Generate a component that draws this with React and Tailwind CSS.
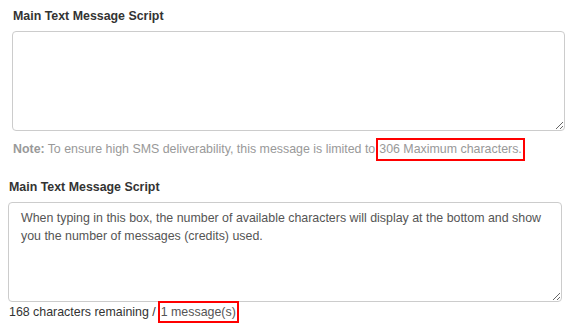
export default function App() {
  return (
    <div className="w-[575px] h-[331px] bg-white text-[12.4px] leading-[17px] text-[#333] overflow-hidden" style={{ fontFamily: '"Liberation Sans", Arial, sans-serif' }}>
      <div className="pl-[13px] pt-[8px] font-bold">Main Text Message Script</div>
      <textarea
        className="block ml-[12px] mt-[6px] w-[553px] h-[100px] border border-[#ccc] rounded-[4px] px-[12px] py-[6px] text-[#555] outline-none"
        defaultValue=""
      />
      <div className="pl-[13px] mt-[7px] text-[#999] flex items-center h-[23px]">
        <span className="font-bold">Note:</span>
        <span className="ml-[3px]">To ensure high SMS deliverability, this message is limited to</span>
        <span className="inline-flex items-center h-[23px] border-2 border-[#f00] pl-[1px] pr-[1px] ml-[1px]">306 Maximum characters.</span>
      </div>
      <div className="pl-[9px] mt-[18px] font-bold">Main Text Message Script</div>
      <textarea
        className="block ml-[8px] mt-[6px] w-[554px] h-[100px] border border-[#ccc] rounded-[4px] pl-[12px] pr-[10px] py-[6px] text-[#555] leading-[18px] outline-none"
        defaultValue="When typing in this box, the number of available characters will display at the bottom and show you the number of messages (credits) used."
      />
      <div className="pl-[9px] flex items-center h-[22px] -mt-[1px]">
        <span>168 characters remaining /</span>
        <span className="inline-flex items-center h-[22px] border-2 border-[#f00] pl-[1px] pr-[1px] ml-[2px] text-[#555]">1 message(s)</span>
      </div>
    </div>
  );
}
